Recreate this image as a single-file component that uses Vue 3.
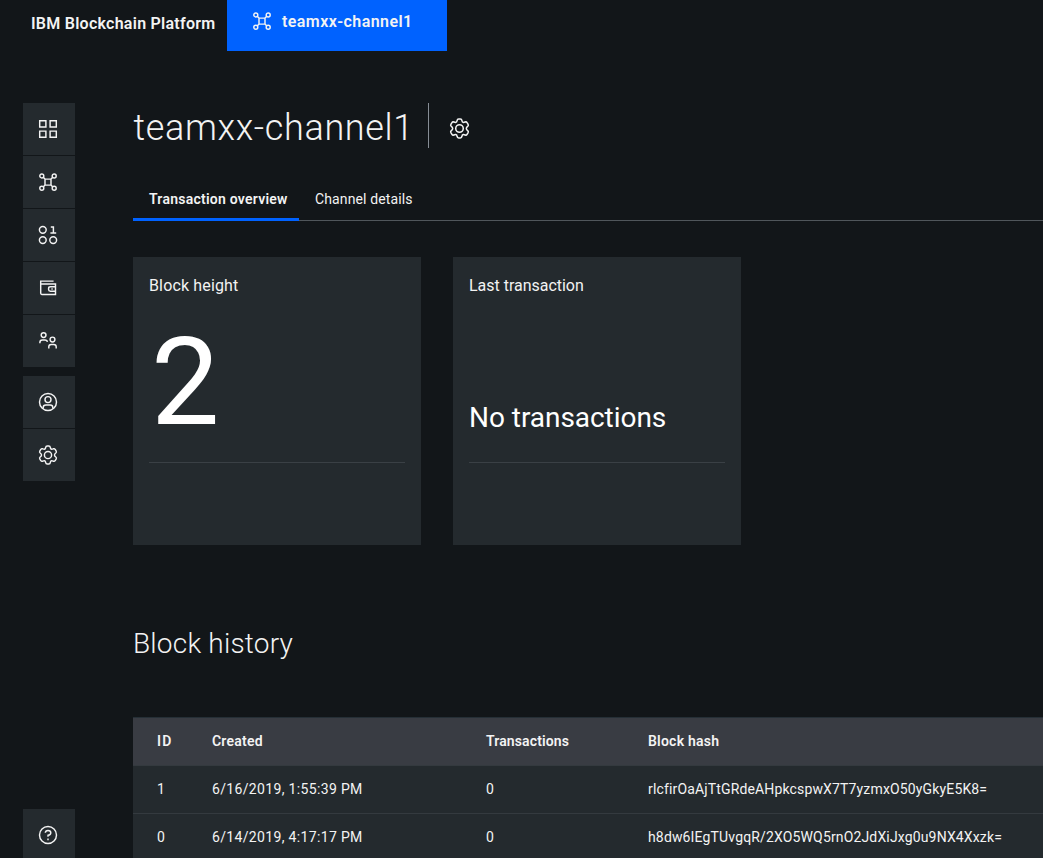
<script setup>
import { h } from 'vue'

const gear = 'M7.7 2.4Q7.9 1 9.2 1H10.8Q12.1 1 12.3 2.4Q12.4 3.9 13.6 4.2Q14.1 4.3 15.3 3.8Q16.6 3.4 17.2 4.5L18.2 6.1Q18.8 7.2 17.8 8Q16.5 8.9 16.5 10Q16.5 11.1 17.8 12Q18.8 12.8 18.2 13.9L17.2 15.5Q16.6 16.6 15.3 16.2Q14.1 15.7 13.6 15.8Q12.4 16.1 12.3 17.6Q12.1 19 10.8 19H9.2Q7.9 19 7.7 17.6Q7.6 16.1 6.4 15.8Q5.9 15.7 4.7 16.2Q3.4 16.6 2.8 15.5L1.8 13.9Q1.2 12.8 2.2 12Q3.5 11.1 3.5 10Q3.5 8.9 2.2 8Q1.2 7.2 1.8 6.1L2.8 4.5Q3.4 3.4 4.7 3.8Q5.9 4.3 6.4 4.2Q7.6 3.9 7.7 2.4Z'
const c = (cx, cy, r) => ['circle', { cx, cy, r }]
const p = (d) => ['path', { d }]
const icons = {
  grid: [p('M1.7 1.7h6.2v6.2h-6.2zM12.1 1.7h6.2v6.2h-6.2zM1.7 12.1h6.2v6.2h-6.2zM12.1 12.1h6.2v6.2h-6.2z')],
  nodes: [c(3.8, 3.9, 2), c(16.2, 3.9, 2), c(3.8, 16.3, 2), c(16.2, 16.3, 2), p('M7 7.1h6v6H7zM5.2 5.3l1.8 1.8M14.8 5.3l-1.8 1.8M5.2 14.9l1.8-1.8M14.8 14.9l-1.8-1.8')],
  binary: [c(4.8, 4.8, 3.4), c(4.8, 15.1, 3.4), c(15.2, 15.1, 3.4), p('M12.8 2h2.6v6M12.4 8h5.8')],
  wallet: [p('M15.6 3.1H2.7v12.2q0 1.1 1.1 1.1h13.7V6H2.7M17.5 8.7h-5.1q-1.8 0-1.8 1.7v1.2q0 1.7 1.8 1.7h5.1'), p('M13.4 11h1.3')],
  users: [c(5.6, 4.1, 2.4), p('M1.9 12.3v-.9q0-2.5 2.4-2.5h2.6q2.3 0 2.5 2'), c(14.5, 8.5, 2.4), p('M10.8 17.5v-1.7q0-2.4 2.4-2.4h2.6q2.4 0 2.4 2.4v1.7')],
  user: [c(10, 10, 8.5), c(10, 7.6, 3), p('M5.2 16.6v-1q0-2.6 2.6-2.6h4.4q2.6 0 2.6 2.6v1')],
  gear: [p(gear), c(10, 10, 3.6)],
  help: [c(10, 10, 8.5), p('M7.3 7.7Q7.5 5.4 10 5.4Q12.8 5.4 12.8 7.7Q12.8 9.8 10 10.3V11.8M10 13.5v1.7')],
}
const Icon = ({ name }) =>
  h('svg', { viewBox: '0 0 20 20', width: 20, height: 20, fill: 'none', stroke: 'currentColor', 'stroke-width': 1.45 },
    icons[name].map(([tag, attrs]) => h(tag, attrs)))
Icon.props = ['name']

const primary = ['grid', 'nodes', 'binary', 'wallet', 'users']
const secondary = ['user', 'gear']
const blocks = [
  { id: 1, created: '6/16/2019, 1:55:39 PM', tx: 0, hash: 'rlcfirOaAjTtGRdeAHpkcspwX7T7yzmxO50yGkyE5K8=' },
  { id: 0, created: '6/14/2019, 4:17:17 PM', tx: 0, hash: 'h8dw6IEgTUvgqR/2XO5WQ5rnO2JdXiJxg0u9NX4Xxzk=' },
]
</script>

<template>
  <div class="app">
    <header class="top">
      <div class="brand">IBM Blockchain Platform</div>
      <div class="crumb"><Icon name="nodes" /><span>teamxx-channel1</span></div>
    </header>
    <div class="body">
      <nav class="side">
        <div class="group"><a v-for="n in primary" :key="n" class="item"><Icon :name="n" /></a></div>
        <div class="group"><a v-for="n in secondary" :key="n" class="item"><Icon :name="n" /></a></div>
        <div class="group bottom"><a class="item"><Icon name="help" /></a></div>
      </nav>
      <main class="main">
        <div class="heading">
          <h1>teamxx-channel1</h1>
          <span class="rule"></span>
          <Icon name="gear" class="cog" />
        </div>
        <div class="tabs">
          <div class="tab active">Transaction overview</div>
          <div class="tab">Channel details</div>
        </div>
        <div class="cards">
          <section class="card">
            <h3>Block height</h3>
            <div class="value big">2</div>
          </section>
          <section class="card">
            <h3 class="tight">Last transaction</h3>
            <div class="value text">No transactions</div>
          </section>
        </div>
        <h2>Block history</h2>
        <div class="table">
          <div class="row head">
            <span class="id">ID</span><span>Created</span><span class="n">Transactions</span><span>Block hash</span>
          </div>
          <div v-for="b in blocks" :key="b.id" class="row">
            <span>{{ b.id }}</span><span class="date">{{ b.created }}</span><span>{{ b.tx }}</span><span class="hash">{{ b.hash }}</span>
          </div>
        </div>
      </main>
    </div>
  </div>
</template>

<style>
body { background: #121619; }
</style>

<style scoped>
* { box-sizing: border-box; }
.app { height: 858px; overflow: hidden; background: #121619; color: #f3f3f3; font-family: Roboto, "Liberation Sans", sans-serif; display: flex; flex-direction: column; }
svg { display: block; flex: none; }
h1, h2, h3 { margin: 0; }
.top { height: 51px; flex: none; display: flex; font-size: 16px; font-weight: 600; white-space: nowrap; }
.brand { width: 227px; padding-left: 31px; line-height: 47px; letter-spacing: 0.26px; }
.crumb { width: 220px; background: #0062ff; display: flex; align-items: center; gap: 10px; padding: 0 0 9px 25px; letter-spacing: 0.43px; }
.body { flex: 1; display: flex; min-height: 0; padding-top: 52px; }
.side { width: 133px; flex: none; padding-left: 23px; display: flex; flex-direction: column; gap: 9px; height: 758px; }
.group { display: flex; flex-direction: column; gap: 1px; width: 52px; }
.bottom { margin-top: auto; }
.item { height: 52px; background: #242a2e; display: flex; align-items: center; justify-content: center; padding-right: 2px; }
.main { flex: 1; min-width: 0; }
.heading { display: flex; height: 45px; }
h1 { font-size: 36px; font-weight: 300; line-height: 50px; letter-spacing: 0.65px; width: 295px; padding-left: 0.5px; white-space: nowrap; }
.rule { width: 1px; background: #868d95; }
.cog { width: 21px; height: 21px; margin: 15px 0 0 20px; }
.tabs { display: flex; height: 73px; border-bottom: 1px solid #50565b; align-items: flex-end; font-size: 14px; }
.tab { height: 43px; line-height: 43px; padding-left: 16px; letter-spacing: 0.12px; margin-bottom: -1px; }
.tab.active { width: 166px; font-weight: 600; letter-spacing: 0.24px; border-bottom: 3px solid #0062ff; }
.cards { display: flex; gap: 32px; margin-top: 36px; }
.card { width: 288px; height: 288px; background: #242a2e; padding: 16px; }
h3 { font-size: 16px; font-weight: 400; line-height: 26px; letter-spacing: 0.15px; }
h3.tight { letter-spacing: -0.02px; }
.value { height: 164px; border-bottom: 1px solid #3a4045; color: #fff; display: flex; align-items: flex-end; white-space: nowrap; }
.big { font-size: 122px; line-height: 122px; padding: 0 0 18px 2px; }
.text { font-size: 28px; line-height: 36px; padding-bottom: 26px; letter-spacing: -0.04px; }
h2 { font-size: 28px; font-weight: 300; line-height: 36px; letter-spacing: 0.2px; padding-top: 1px; margin-top: 80px; }
.table { margin-top: 55px; font-size: 14px; border-top: 1px solid #252f36; }
.row { display: grid; grid-template-columns: 55px 274px 162px 1fr; padding-left: 24px; height: 48px; line-height: 46px; background: #242a2e; border-bottom: 1px solid #343a3f; white-space: nowrap; }
.head { font-weight: 600; background: #393c43; letter-spacing: 0.22px; line-height: 47px; border-bottom-color: #343a3f; }
.head .n { letter-spacing: 0.12px; }
.head .id { letter-spacing: 1.2px; }
.date { letter-spacing: 0.34px; }
.hash { letter-spacing: 0.15px; }
</style>
